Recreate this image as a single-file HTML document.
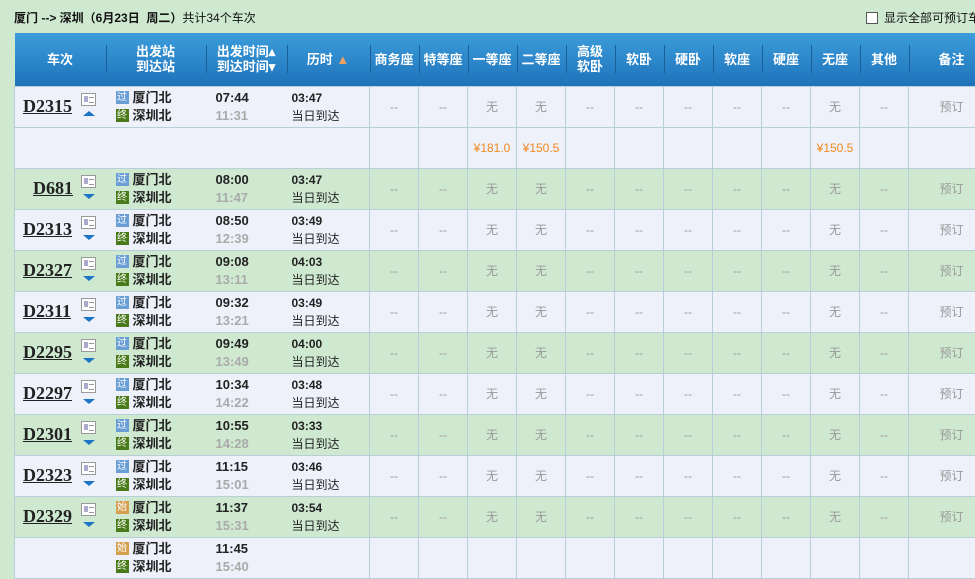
<!DOCTYPE html>
<html><head><meta charset="utf-8"><style>
*{margin:0;padding:0;box-sizing:border-box}
body{width:975px;height:545px;overflow:hidden;background:#cfe9d0;font-family:"Liberation Sans","Noto Sans CJK SC",sans-serif;position:relative}
.title{position:absolute;left:14px;top:9px;font-size:12px;font-weight:bold;color:#111}
.title span{font-weight:normal}
.chk{position:absolute;left:866px;top:9px;font-size:12px;color:#111;white-space:nowrap}
.chk i{display:inline-block;width:12px;height:12px;border:1px solid #555;background:#fff;vertical-align:-2px;margin-right:6px}
table{position:absolute;left:14px;top:33px;border-collapse:collapse;table-layout:fixed;width:980px}
th{height:53px;background:linear-gradient(#3c9ddb,#1e72ba);color:#fff;font-size:13px;font-weight:bold;line-height:15px;position:relative;border-left:0}
th:after{content:"";position:absolute;left:0;top:12px;height:28px;border-left:1px solid #1a5f9a}
th:first-child:after{display:none}
td{height:41px;border:1px solid #b6cfd9;text-align:center;font-size:12px;color:#999}
tr.l td{background:#eef1fa}
tr.g td{background:#cfe9d0}
td.n{border-right:none;text-align:left;padding-left:8px;color:#222;font-family:"Liberation Serif",serif;font-weight:bold;font-size:18px;position:relative}
td.n u{text-decoration:underline}
td.n .ic{position:absolute;left:66px;top:6px;width:15px;height:13px;border:1px solid #999;background:#fff}
td.n .ic:before{content:"";position:absolute;left:2px;top:2px;width:4px;height:6px;background:#aac}
td.n .ic:after{content:"";position:absolute;left:7px;top:3px;width:5px;height:4px;border-top:1px solid #999;border-bottom:1px solid #999}
td.n .ar{position:absolute;left:68px;top:25px;width:0;height:0;border-left:6px solid transparent;border-right:6px solid transparent;border-top:5px solid #1c74c4}
td.n .ar.up{border-top:none;border-bottom:5px solid #1c74c4;top:24px}
td.s{border-left:none;border-right:none;text-align:left;padding-left:10px;color:#222;font-weight:bold;font-size:13px;line-height:18px;white-space:nowrap}
td.s b{display:inline-block;width:13px;height:13px;font-size:10px;line-height:13px;text-align:center;color:#fff;margin-right:4px;vertical-align:middle;font-weight:normal;position:relative;top:-1px}
b.p{background:#6a9fd6}b.e{background:#4a7a1a}b.st{background:#d4a050}
td.t{border-left:none;border-right:none;text-align:left;padding-left:10px;font-weight:bold;font-size:13px;line-height:18px;color:#222}
td.t em{font-style:normal;color:#aaa}
td.d{border-left:none;text-align:left;padding-left:5px;font-size:12px;line-height:18px;color:#222}
td.d b{font-weight:bold}
.pr{color:#f08a20}
</style></head><body>
<div class="title">厦门 --&gt; 深圳（6月23日&nbsp; 周二）<span>共计34个车次</span></div>
<div class="chk"><i></i>显示全部可预订车次</div>
<table>
<colgroup><col style="width:91px"><col style="width:100px"><col style="width:81px"><col style="width:83px"><col span="11" style="width:49px"><col style="width:86px"></colgroup>
<tr><th>车次</th><th>出发站<br>到达站</th><th>出发时间▴<br>到达时间▾</th><th>历时 <span style="color:#f0a060">▲</span></th><th>商务座</th><th>特等座</th><th>一等座</th><th>二等座</th><th>高级<br>软卧</th><th>软卧</th><th>硬卧</th><th>软座</th><th>硬座</th><th>无座</th><th>其他</th><th>备注</th></tr>
<tr class="l"><td class="n"><u>D2315</u><span class="ic"></span><span class="ar up"></span></td><td class="s"><b class="p">过</b>厦门北<br><b class="e">终</b>深圳北</td><td class="t">07:44<br><em>11:31</em></td><td class="d"><b>03:47</b><br>当日到达</td><td>--</td><td>--</td><td>无</td><td>无</td><td>--</td><td>--</td><td>--</td><td>--</td><td>--</td><td>无</td><td>--</td><td>预订</td></tr>
<tr class="l"><td colspan="4"></td><td></td><td></td><td class="pr">¥181.0</td><td class="pr">¥150.5</td><td></td><td></td><td></td><td></td><td></td><td class="pr">¥150.5</td><td></td><td></td></tr>
<tr class="g"><td class="n" style="padding-left:18px"><u>D681</u><span class="ic"></span><span class="ar"></span></td><td class="s"><b class="p">过</b>厦门北<br><b class="e">终</b>深圳北</td><td class="t">08:00<br><em>11:47</em></td><td class="d"><b>03:47</b><br>当日到达</td><td>--</td><td>--</td><td>无</td><td>无</td><td>--</td><td>--</td><td>--</td><td>--</td><td>--</td><td>无</td><td>--</td><td>预订</td></tr>
<tr class="l"><td class="n"><u>D2313</u><span class="ic"></span><span class="ar"></span></td><td class="s"><b class="p">过</b>厦门北<br><b class="e">终</b>深圳北</td><td class="t">08:50<br><em>12:39</em></td><td class="d"><b>03:49</b><br>当日到达</td><td>--</td><td>--</td><td>无</td><td>无</td><td>--</td><td>--</td><td>--</td><td>--</td><td>--</td><td>无</td><td>--</td><td>预订</td></tr>
<tr class="g"><td class="n"><u>D2327</u><span class="ic"></span><span class="ar"></span></td><td class="s"><b class="p">过</b>厦门北<br><b class="e">终</b>深圳北</td><td class="t">09:08<br><em>13:11</em></td><td class="d"><b>04:03</b><br>当日到达</td><td>--</td><td>--</td><td>无</td><td>无</td><td>--</td><td>--</td><td>--</td><td>--</td><td>--</td><td>无</td><td>--</td><td>预订</td></tr>
<tr class="l"><td class="n"><u>D2311</u><span class="ic"></span><span class="ar"></span></td><td class="s"><b class="p">过</b>厦门北<br><b class="e">终</b>深圳北</td><td class="t">09:32<br><em>13:21</em></td><td class="d"><b>03:49</b><br>当日到达</td><td>--</td><td>--</td><td>无</td><td>无</td><td>--</td><td>--</td><td>--</td><td>--</td><td>--</td><td>无</td><td>--</td><td>预订</td></tr>
<tr class="g"><td class="n"><u>D2295</u><span class="ic"></span><span class="ar"></span></td><td class="s"><b class="p">过</b>厦门北<br><b class="e">终</b>深圳北</td><td class="t">09:49<br><em>13:49</em></td><td class="d"><b>04:00</b><br>当日到达</td><td>--</td><td>--</td><td>无</td><td>无</td><td>--</td><td>--</td><td>--</td><td>--</td><td>--</td><td>无</td><td>--</td><td>预订</td></tr>
<tr class="l"><td class="n"><u>D2297</u><span class="ic"></span><span class="ar"></span></td><td class="s"><b class="p">过</b>厦门北<br><b class="e">终</b>深圳北</td><td class="t">10:34<br><em>14:22</em></td><td class="d"><b>03:48</b><br>当日到达</td><td>--</td><td>--</td><td>无</td><td>无</td><td>--</td><td>--</td><td>--</td><td>--</td><td>--</td><td>无</td><td>--</td><td>预订</td></tr>
<tr class="g"><td class="n"><u>D2301</u><span class="ic"></span><span class="ar"></span></td><td class="s"><b class="p">过</b>厦门北<br><b class="e">终</b>深圳北</td><td class="t">10:55<br><em>14:28</em></td><td class="d"><b>03:33</b><br>当日到达</td><td>--</td><td>--</td><td>无</td><td>无</td><td>--</td><td>--</td><td>--</td><td>--</td><td>--</td><td>无</td><td>--</td><td>预订</td></tr>
<tr class="l"><td class="n"><u>D2323</u><span class="ic"></span><span class="ar"></span></td><td class="s"><b class="p">过</b>厦门北<br><b class="e">终</b>深圳北</td><td class="t">11:15<br><em>15:01</em></td><td class="d"><b>03:46</b><br>当日到达</td><td>--</td><td>--</td><td>无</td><td>无</td><td>--</td><td>--</td><td>--</td><td>--</td><td>--</td><td>无</td><td>--</td><td>预订</td></tr>
<tr class="g"><td class="n"><u>D2329</u><span class="ic"></span><span class="ar"></span></td><td class="s"><b class="st">始</b>厦门北<br><b class="e">终</b>深圳北</td><td class="t">11:37<br><em>15:31</em></td><td class="d"><b>03:54</b><br>当日到达</td><td>--</td><td>--</td><td>无</td><td>无</td><td>--</td><td>--</td><td>--</td><td>--</td><td>--</td><td>无</td><td>--</td><td>预订</td></tr>
<tr class="l"><td class="n"></td><td class="s"><b class="st">始</b>厦门北<br><b class="e">终</b>深圳北</td><td class="t">11:45<br><em>15:40</em></td><td class="d"></td><td></td><td></td><td></td><td></td><td></td><td></td><td></td><td></td><td></td><td></td><td></td><td></td></tr>
</table>
</body></html>
